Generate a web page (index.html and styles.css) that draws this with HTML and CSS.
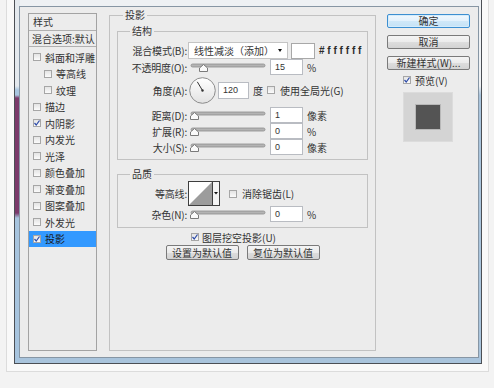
FILE: index.html
```html
<html><head>
    <link rel="stylesheet" href="styles.css">
</head><body>
<div class="screen">
  <div class="frame">
    <div class="dialog">

      <div class="styles">
        <div class="styles-head">样式</div>
        <div class="styles-blend">混合选项:默认</div>
        <ul class="style-list">
          <li><span class="cb"></span>斜面和浮雕</li>
          <li class="sub"><span class="cb"></span>等高线</li>
          <li class="sub"><span class="cb"></span>纹理</li>
          <li><span class="cb"></span>描边</li>
          <li><span class="cb on"><svg width="8" height="8" viewBox="0 0 8 8"><path d="M1.5 4 L3.2 6 L6.5 1.5" fill="none" stroke="#2c4aa8" stroke-width="1.2"/></svg></span>内阴影</li>
          <li><span class="cb"></span>内发光</li>
          <li><span class="cb"></span>光泽</li>
          <li><span class="cb"></span>颜色叠加</li>
          <li><span class="cb"></span>渐变叠加</li>
          <li><span class="cb"></span>图案叠加</li>
          <li><span class="cb"></span>外发光</li>
          <li class="selected"><span class="cb on"><svg width="8" height="8" viewBox="0 0 8 8"><path d="M1.5 4 L3.2 6 L6.5 1.5" fill="none" stroke="#2c4aa8" stroke-width="1.2"/></svg></span>投影</li>
        </ul>
      </div>

      <fieldset class="panel">
        <legend>投影</legend>

        <fieldset class="group structure">
          <legend>结构</legend>
          <div class="row row-blend">
            <span class="lbl">混合模式(B):</span>
            <div class="select"><span>线性减淡（添加）</span><span class="arrow"></span></div>
            <span class="swatch"></span>
            <span class="hex">#ffffff</span>
          </div>
          <div class="row row-16">
            <span class="lbl">不透明度(O):</span>
            <svg class="slider" width="76" height="12" viewBox="0 0 76 12">
              <rect x="1" y="3" width="74" height="3" rx="1.5" fill="#b4b4b4" stroke="#8e8e8e" stroke-width="0.8"/>
              <path d="M9.5 10.5 L9.5 7 L13.5 3.5 L17.5 7 L17.5 10.5 Z" fill="#fafafa" stroke="#7a7a7a"/>
            </svg>
            <span class="num">15</span>
            <span class="unit">%</span>
          </div>
          <div class="row row-angle">
            <span class="lbl">角度(A):</span>
            <svg class="dial" width="27" height="27" viewBox="0 0 27 27">
              <defs>
                <linearGradient id="dialFill" x1="0" y1="0" x2="0" y2="1">
                  <stop offset="0" stop-color="#ffffff"/>
                  <stop offset="1" stop-color="#e2e2e2"/>
                </linearGradient>
              </defs>
              <circle cx="13.5" cy="13.5" r="12.8" fill="url(#dialFill)" stroke="#8c8c8c"/>
              <line x1="13.5" y1="13.5" x2="8.3" y2="4.8" stroke="#333" stroke-width="1"/>
              <circle cx="13.5" cy="13.5" r="1.2" fill="#333"/>
            </svg>
            <span class="num num-angle">120</span>
            <span class="unit deg">度</span>
            <span class="cb cb-global"></span>
            <span class="cb-text">使用全局光(G)</span>
          </div>
          <div class="row row-16 row-gap">
            <span class="lbl">距离(D):</span>
            <svg class="slider" width="76" height="12" viewBox="0 0 76 12">
              <rect x="1" y="3" width="74" height="3" rx="1.5" fill="#b4b4b4" stroke="#8e8e8e" stroke-width="0.8"/>
              <path d="M0.5 10.5 L0.5 7 L4.5 3.5 L8.5 7 L8.5 10.5 Z" fill="#fafafa" stroke="#7a7a7a"/>
            </svg>
            <span class="num">1</span>
            <span class="unit">像素</span>
          </div>
          <div class="row row-16">
            <span class="lbl">扩展(R):</span>
            <svg class="slider" width="76" height="12" viewBox="0 0 76 12">
              <rect x="1" y="3" width="74" height="3" rx="1.5" fill="#b4b4b4" stroke="#8e8e8e" stroke-width="0.8"/>
              <path d="M0.5 10.5 L0.5 7 L4.5 3.5 L8.5 7 L8.5 10.5 Z" fill="#fafafa" stroke="#7a7a7a"/>
            </svg>
            <span class="num">0</span>
            <span class="unit">%</span>
          </div>
          <div class="row row-16">
            <span class="lbl">大小(S):</span>
            <svg class="slider" width="76" height="12" viewBox="0 0 76 12">
              <rect x="1" y="3" width="74" height="3" rx="1.5" fill="#b4b4b4" stroke="#8e8e8e" stroke-width="0.8"/>
              <path d="M0.5 10.5 L0.5 7 L4.5 3.5 L8.5 7 L8.5 10.5 Z" fill="#fafafa" stroke="#7a7a7a"/>
            </svg>
            <span class="num">0</span>
            <span class="unit">像素</span>
          </div>
        </fieldset>

        <fieldset class="group quality">
          <legend>品质</legend>
          <div class="row row-contour">
            <span class="lbl">等高线:</span>
            <svg class="contour" width="32" height="25" viewBox="0 0 32 25">
              <rect x="0.5" y="0.5" width="24" height="24" fill="#fff" stroke="#3e3e3e"/>
              <path d="M1 24 L24 1 L24 24 Z" fill="#9c9c9c"/>
              <rect x="24.5" y="0.5" width="7" height="24" fill="#f4f4f4" stroke="#3e3e3e"/>
              <path d="M26 11 L30 11 L28 13.5 Z" fill="#111"/>
            </svg>
            <span class="cb cb-aa"></span>
            <span class="cb-text">消除锯齿(L)</span>
          </div>
          <div class="row row-16">
            <span class="lbl">杂色(N):</span>
            <svg class="slider" width="76" height="12" viewBox="0 0 76 12">
              <rect x="1" y="3" width="74" height="3" rx="1.5" fill="#b4b4b4" stroke="#8e8e8e" stroke-width="0.8"/>
              <path d="M0.5 10.5 L0.5 7 L4.5 3.5 L8.5 7 L8.5 10.5 Z" fill="#fafafa" stroke="#7a7a7a"/>
            </svg>
            <span class="num">0</span>
            <span class="unit">%</span>
          </div>
        </fieldset>

        <div class="knockout">
          <span class="cb on"><svg width="8" height="8" viewBox="0 0 8 8"><path d="M1.5 4 L3.2 6 L6.5 1.5" fill="none" stroke="#2c4aa8" stroke-width="1.2"/></svg></span>
          <span class="cb-text">图层挖空投影(U)</span>
        </div>
        <div class="defaults">
          <div class="btn btn-small">设置为默认值</div>
          <div class="btn btn-small">复位为默认值</div>
        </div>
      </fieldset>

      <div class="actions">
        <div class="btn btn-ok">确定</div>
        <div class="btn">取消</div>
        <div class="btn">新建样式(W)...</div>
        <div class="preview-check">
          <span class="cb on"><svg width="8" height="8" viewBox="0 0 8 8"><path d="M1.5 4 L3.2 6 L6.5 1.5" fill="none" stroke="#2c4aa8" stroke-width="1.2"/></svg></span>
          <span class="cb-text">预览(V)</span>
        </div>
        <div class="preview">
          <div class="preview-swatch"></div>
        </div>
      </div>

    </div>
  </div>
</div>
</body></html>
```

FILE: styles.css
```css
* {
    box-sizing: border-box;
}

body {
    margin: 0;
    background: #f3f3f3;
    font-family: "Noto Sans CJK SC", sans-serif;
    font-size: 10px;
    color: #333;
}

/* page + window frame */
.screen {
    margin-left: 6px;
    width: 483px;
    height: 373px;
    padding-left: 7px;
    border: 1px solid #dcdcdc;
    border-top: none;
    background: #f9f9f9;
}

.frame {
    width: 468px;
    height: 365px;
    margin-top: -1px;
    padding: 6px 2px 5px 4px;
    border: 1px solid #4b4f55;
    background:
        linear-gradient(#e4e9ee 0, #e4e9ee 86px, #a9c6e0 90px, #a9c6e0 95px, #7b3a6b 98px, #7b3a6b 213px, #a7c4de 218px, #a7c4de 100%) left top / 5px 100% no-repeat,
        linear-gradient(#eef1f4 0, #eef1f4 86px, #a9c4dc 95px, #a9c4dc 100%);
}

.dialog {
    height: 352px;
    display: flex;
    align-items: flex-start;
    border: 1px solid #8796a4;
    background: #ececec;
}

/* left: style list */
.styles {
    width: 69px;
    height: 338px;
    margin: 6px 0 0 8px;
    border: 1px solid #a3a3a3;
}

.styles-head {
    height: 17px;
    line-height: 16px;
    padding-left: 4px;
    border-bottom: 1px solid #b0b0b0;
}

.styles-blend {
    height: 16px;
    line-height: 15px;
    padding-left: 3px;
    border-bottom: 1px solid #b0b0b0;
    white-space: nowrap;
}

.style-list {
    list-style: none;
    margin: 0;
    padding: 2px 0 0;
}

.style-list li {
    height: 16.5px;
    display: flex;
    align-items: center;
    padding-left: 4px;
    white-space: nowrap;
}

.style-list li.sub {
    padding-left: 15px;
}

.style-list li.selected {
    background: #3399ff;
    color: #1a1a1a;
}

.cb {
    flex: none;
    width: 8px;
    height: 8px;
    margin-right: 4px;
    border: 1px solid #a6a6a6;
    background: linear-gradient(#e4e4e4, #fbfbfb);
    display: flex;
    align-items: center;
    justify-content: center;
}

.cb svg {
    display: block;
    margin: -1px;
}

.cb-text {
    white-space: nowrap;
}

/* middle: drop shadow panel */
fieldset {
    margin: 0;
    padding: 0;
    min-width: 0;
}

legend {
    padding: 0 2px;
    line-height: 14px;
}

.panel {
    width: 267px;
    height: 343px;
    margin: 1px 0 0 12px;
    border: 1px solid #c2c2c2;
}

.panel > legend {
    margin-left: 13px;
}

.group {
    margin: 2px 7px 0;
    padding: 0 0 4px;
    border: 1px solid #c2c2c2;
}

.group > legend {
    margin-left: 12px;
}

.quality {
    margin-top: 7px;
    padding-bottom: 5px;
}

.row {
    display: flex;
    align-items: center;
    white-space: nowrap;
}

.row-blend {
    height: 17px;
    margin-top: 4px;
}

.row-16 {
    height: 16px;
}

.row-gap {
    margin-top: 2px;
}

.row-angle {
    height: 30px;
}

.row-contour {
    height: 25px;
}

.lbl {
    flex: none;
    width: 69px;
    text-align: right;
    letter-spacing: -0.2px;
}

.select {
    width: 100px;
    height: 17px;
    margin-left: 1px;
    padding: 0 5px;
    display: flex;
    align-items: center;
    justify-content: space-between;
    border: 1px solid #c4c4c4;
    background: #fff;
}

.arrow {
    width: 0;
    height: 0;
    border-left: 2.5px solid transparent;
    border-right: 2.5px solid transparent;
    border-top: 3px solid #111;
}

.swatch {
    width: 24px;
    height: 16px;
    margin-left: 3px;
    border: 1px solid #a8a8a8;
    background: #fff;
}

.hex {
    margin-left: 4px;
    font-family: "Liberation Sans", sans-serif;
    font-weight: bold;
    letter-spacing: 2.8px;
    color: #2a2a2a;
}

.slider {
    display: block;
    margin-left: 3px;
}

.num {
    width: 33px;
    height: 16px;
    margin-left: 4px;
    padding-left: 4px;
    border: 1px solid #b9bcc2;
    background: #fff;
    font-family: "Liberation Sans", sans-serif;
    font-size: 9px;
    line-height: 14px;
}

.unit {
    margin-left: 4px;
}

.dial {
    display: block;
    margin-left: 2px;
}

.num-angle {
    width: 31px;
    height: 17px;
    line-height: 15px;
    margin-left: 2px;
}

.deg {
    margin-left: 4px;
}

.cb-global {
    margin-left: 4px;
    margin-right: 5px;
}

.contour {
    display: block;
    margin-left: 1px;
}

.cb-aa {
    margin-left: 9px;
    margin-right: 5px;
}

.knockout {
    height: 14px;
    margin: 2px 0 0 81px;
    display: flex;
    align-items: center;
}

.knockout .cb {
    margin-right: 3px;
}

.defaults {
    display: flex;
    justify-content: center;
    gap: 8px;
    margin-top: 1px;
}

/* buttons */
.btn {
    height: 14px;
    border: 1px solid #7a7a7a;
    border-radius: 2px;
    background: linear-gradient(#f4f4f4 0, #ebebeb 50%, #dddddd 50%, #d3d3d3 100%);
    text-align: center;
    line-height: 12px;
    white-space: nowrap;
}

.btn-small {
    width: 73px;
    height: 15px;
    line-height: 13px;
}

/* right column */
.actions {
    width: 83px;
    margin: 7px 0 0 11px;
    display: flex;
    flex-direction: column;
}

.actions .btn + .btn {
    margin-top: 7px;
}

.btn-ok {
    border-color: #3d8fd1;
    background: linear-gradient(#f1f8fe 0, #e3f1fc 50%, #d0e8f8 50%, #c5e2f6 100%);
    box-shadow: inset 0 0 0 1px #d5ecfb;
}

.preview-check {
    height: 14px;
    margin: 3px 0 0 16px;
    display: flex;
    align-items: center;
}

.preview {
    width: 50px;
    height: 50px;
    margin: 5px 0 0 16px;
    display: flex;
    align-items: center;
    justify-content: center;
    border: 1px solid #dcdcdc;
    background: #d4d4d4;
}

.preview-swatch {
    width: 24px;
    height: 24px;
    background: #545454;
    box-shadow: 0 0 0 1px #b8b8b8;
}
```
